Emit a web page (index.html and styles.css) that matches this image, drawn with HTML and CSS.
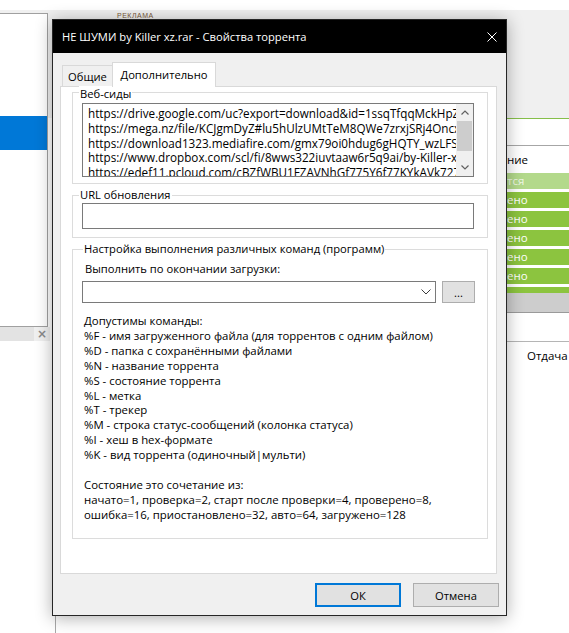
FILE: index.html
```html
<!DOCTYPE html>
<html lang="ru">
<head>
<meta charset="utf-8">
<title>Свойства торрента</title>
<link rel="stylesheet" href="styles.css">
</head>
<body>
<div class="screen">
  <div class="bg-band"></div>
  <div class="left-pane"><div class="left-sel"></div></div>
  <div class="left-bar"><span class="left-x">×</span></div>
  <div class="ad-label">РЕКЛАМА</div>
  <div class="right-pane">
    <div class="rp-top"></div>
    <div class="rp-gap"></div>
    <div class="rp-head">ние</div>
    <div class="rp-rows">
      <div class="rp-row rp-light">тся</div>
      <div class="rp-row">ено</div>
      <div class="rp-row">ено</div>
      <div class="rp-row">ено</div>
      <div class="rp-row">ено</div>
      <div class="rp-row">ено</div>
      <div class="rp-row rp-cut">ено</div>
    </div>
    <div class="rp-scroll"></div>
    <div class="rp-space"></div>
    <div class="rp-foot">Отдача</div>
  </div>
  <div class="bottom-line"></div>

  <div class="dialog">
    <div class="titlebar">
      <span class="title">НЕ ШУМИ by Killer xz.rar - Свойства торрента</span>
      <span class="close">
        <svg width="10" height="10" viewBox="0 0 10 10"><path d="M0.5 0.5 L9.5 9.5 M9.5 0.5 L0.5 9.5" stroke="#fff" stroke-width="1" fill="none"/></svg>
      </span>
    </div>
    <div class="dlg-body">
      <div class="tabs">
        <div class="tab tab-general">Общие</div>
        <div class="tab tab-adv">Дополнительно</div>
      </div>
      <div class="panel">
        <div class="group group-seeds">
          <span class="legend">Веб-сиды</span>
          <div class="listbox">
            <div class="list-text">https://drive.google.com/uc?export=download&amp;id=1ssqTfqqMckHpZu8fTq
https://mega.nz/file/KCJgmDyZ#lu5hUlzUMtTeM8QWe7zrxjSRj4Oncx9Lr
https://download1323.mediafire.com/gmx79oi0hdug6gHQTY_wzLFSk2xQ
https://www.dropbox.com/scl/fi/8wws322iuvtaaw6r5q9ai/by-Killer-xz.rar
https://edef11.pcloud.com/cBZfWBU1FZAVNhGf775Y6f77KYkAVk727Z</div>
            <div class="vscroll">
              <div class="vs-btn"><svg width="8" height="5" viewBox="0 0 8 5"><path d="M0.5 4.5 L4 1 L7.5 4.5" stroke="#606060" stroke-width="1.2" fill="none"/></svg></div>
              <div class="vs-thumb"></div>
              <div class="vs-track"></div>
              <div class="vs-btn"><svg width="8" height="5" viewBox="0 0 8 5"><path d="M0.5 0.5 L4 4 L7.5 0.5" stroke="#606060" stroke-width="1.2" fill="none"/></svg></div>
            </div>
          </div>
        </div>
        <div class="group group-url">
          <span class="legend legend-up">URL обновления</span>
          <div class="textbox"></div>
        </div>
        <div class="group group-cmd">
          <span class="legend legend-up legend-cmd">Настройка выполнения различных команд (программ)</span>
          <div class="cmd-label">Выполнить по окончании загрузки:</div>
          <div class="cmd-row">
            <div class="combo">
              <svg class="chev" width="10" height="6" viewBox="0 0 10 6"><path d="M0.5 0.5 L5 5 L9.5 0.5" stroke="#3c3c3c" stroke-width="1" fill="none"/></svg>
            </div>
            <div class="browse">...</div>
          </div>
          <div class="help">Допустимы команды:
%F - имя загруженного файла (для торрентов с одним файлом)
%D - папка с сохранёнными файлами
%N - название торрента
%S - состояние торрента
%L - метка
%T - трекер
%M - строка статус-сообщений (колонка статуса)
%I - хеш в hex-формате
%K - вид торрента (одиночный|мульти)

Состояние это сочетание из:
начато=1, проверка=2, старт после проверки=4, проверено=8,
ошибка=16, приостановлено=32, авто=64, загружено=128</div>
        </div>
      </div>
      <div class="buttons">
        <div class="btn btn-default">ОК</div>
        <div class="btn">Отмена</div>
      </div>
    </div>
  </div>
</div>
</body>
</html>
```
FILE: styles.css
```css
* { box-sizing: border-box; }
html, body { margin: 0; padding: 0; }
body {
  font-family: "Open Sans", "Noto Sans", sans-serif;
  font-size: 11.2px;
  color: #000;
}
.screen {
  position: relative;
  width: 569px;
  height: 633px;
  overflow: hidden;
  background: #fff;
}

/* ---------- background windows ---------- */
.bg-band {
  position: absolute;
  left: 0; top: 10px;
  width: 569px; height: 108px;
  background: #f0f0f0;
}
.left-pane {
  position: absolute;
  left: 0; top: 13px;
  width: 48px; height: 314px;
  background: #fff;
  border-top: 1px solid #a0a0a0;
  border-right: 1px solid #a0a0a0;
  border-bottom: 1px solid #a0a0a0;
  padding-top: 102px;
}
.left-sel {
  height: 34px;
  background: #0078d7;
}
.left-bar {
  position: absolute;
  left: 0; top: 327px;
  width: 50px; height: 14px;
  background: linear-gradient(to right, #e3e3e3 0, #e3e3e3 34px, #f0f0f0 34px);
  display: flex;
  justify-content: flex-end;
  align-items: center;
  padding-right: 3px;
}
.left-x {
  font-family: "DejaVu Sans", sans-serif;
  font-size: 12px;
  font-weight: bold;
  color: #8a8a8a;
  line-height: 14px;
}
.ad-label {
  position: absolute;
  left: 117px; top: 12px;
  font-family: "Liberation Sans", sans-serif;
  font-size: 7px;
  line-height: 8px;
  color: #7a5a3a;
  letter-spacing: 0.5px;
}
.right-pane {
  position: absolute;
  left: 505px; top: 10px;
  width: 64px; height: 623px;
  display: flex;
  flex-direction: column;
  background: #fff;
}
.rp-top {
  flex: none;
  height: 109px;
  background: #f0f0f0;
  border-bottom: 1px solid #86bf4a;
}
.rp-gap { flex: none; height: 27px; border-bottom: 1px solid #a6a6a6; }
.rp-head {
  flex: none;
  height: 27px;
  padding-left: 2px;
  line-height: 28px;
  font-size: 11.5px;
}
.rp-rows {
  flex: none;
  display: flex;
  flex-direction: column;
  gap: 3px;
  height: 120px;
  overflow: hidden;
}
.rp-row {
  flex: none;
  height: 16px;
  line-height: 16px;
  padding-left: 2px;
  background: #8cc43f;
  color: #fff;
  font-size: 11.5px;
}
.rp-light { background: #b3d98b; color: #eef7e4; }
.rp-scroll { flex: none; height: 20px; background: #cdcdcd; border-bottom: 1px solid #9a9a9a; }
.rp-space { flex: none; height: 29px; border-bottom: 1px solid #b5b5b5; }
.rp-foot {
  padding-left: 22px;
  padding-top: 6px;
  line-height: 15px;
  font-size: 11.5px;
}
.bottom-line {
  position: absolute;
  left: 55px; top: 600px;
  width: 1px; height: 33px;
  background: #a8a8a8;
}

/* ---------- dialog ---------- */
.dialog {
  position: absolute;
  left: 52px; top: 19px;
  width: 455px; height: 597px;
  background: #f0f0f0;
  border: 1px solid #262626;
  box-shadow: 0 2px 16px rgba(0, 0, 0, 0.32);
  display: flex;
  flex-direction: column;
}
.titlebar {
  flex: none;
  height: 33px;
  background: #000;
  color: #fff;
  display: flex;
  align-items: center;
  padding-left: 9px;
  padding-right: 9px;
}
.title { font-size: 11.2px; }
.close { margin-left: auto; display: flex; }
.dlg-body {
  flex: 1;
  display: flex;
  flex-direction: column;
  padding: 9px 9px 0 7px;
}
.tabs {
  position: relative;
  z-index: 1;
  display: flex;
  align-items: flex-end;
  height: 25px;
  margin-bottom: -1px;
  padding-left: 2px;
}
.tab {
  display: flex;
  align-items: center;
  justify-content: center;
  border: 1px solid #d9d9d9;
  border-bottom: none;
}
.tab-general {
  width: 51px;
  height: 21px;
  margin-bottom: 1px;
  background: #f0f0f0;
}
.tab-adv {
  width: 104px;
  height: 25px;
  margin-left: -1px;
  background: #fff;
  padding-bottom: 1px;
}
.panel {
  flex: none;
  height: 488px;
  background: #fff;
  border: 1px solid #d9d9d9;
  padding: 5px 8px 0 11px;
  display: flex;
  flex-direction: column;
  gap: 11px;
}
.group {
  flex: none;
  border: 1px solid #dcdcdc;
  display: flex;
  flex-direction: column;
  align-items: flex-start;
}
.group-seeds { height: 92px; }
.group-url { height: 43px; }
.group-cmd { height: 290px; }
.legend {
  margin-top: -7px;
  margin-left: 6px;
  padding: 0 1px;
  line-height: 15px;
  background: #fff;
}
.legend-up { margin-top: -9px; }
.legend-cmd { margin-left: 10px; }
.listbox {
  margin-top: 2px;
  margin-left: 9px;
  width: 392px;
  height: 74px;
  border: 1px solid #7a7a7a;
  display: flex;
}
.list-text {
  flex: 1;
  overflow: hidden;
  white-space: pre;
  padding: 2px 0 0 5px;
  line-height: 14.75px;
  font-size: 11.7px;
}
.vscroll {
  flex: none;
  width: 17px;
  background: #f0f0f0;
  display: flex;
  flex-direction: column;
}
.vs-btn {
  flex: none;
  height: 17px;
  display: flex;
  align-items: center;
  justify-content: center;
}
.vs-thumb {
  flex: none;
  height: 30px;
  margin: 0 1px;
  background: #cdcdcd;
}
.vs-track { flex: 1; }
.textbox {
  margin-top: 1px;
  margin-left: 9px;
  width: 392px;
  height: 26px;
  border: 1px solid #7a7a7a;
  background: #fff;
}
.cmd-label {
  margin-top: 5px;
  margin-left: 12px;
  line-height: 15px;
}
.cmd-row {
  margin-top: 5px;
  margin-left: 9px;
  display: flex;
  gap: 6px;
}
.combo {
  width: 354px;
  height: 22px;
  border: 1px solid #7a7a7a;
  background: #fff;
  display: flex;
  align-items: center;
  justify-content: flex-end;
  padding-right: 4px;
}
.browse {
  width: 33px;
  height: 22px;
  background: #e1e1e1;
  border: 1px solid #adadad;
  display: flex;
  align-items: center;
  justify-content: center;
  line-height: 15px;
}
.help {
  margin-top: 11px;
  margin-left: 11px;
  white-space: pre;
  line-height: 14.9px;
  font-size: 11.4px;
}
.buttons {
  margin-top: 9px;
  margin-right: -2px;
  display: flex;
  justify-content: flex-end;
  gap: 12px;
}
.btn {
  width: 86px;
  height: 24px;
  background: #e1e1e1;
  border: 1px solid #adadad;
  display: flex;
  align-items: center;
  justify-content: center;
}
.btn-default { border: 2px solid #0078d7; }
```
